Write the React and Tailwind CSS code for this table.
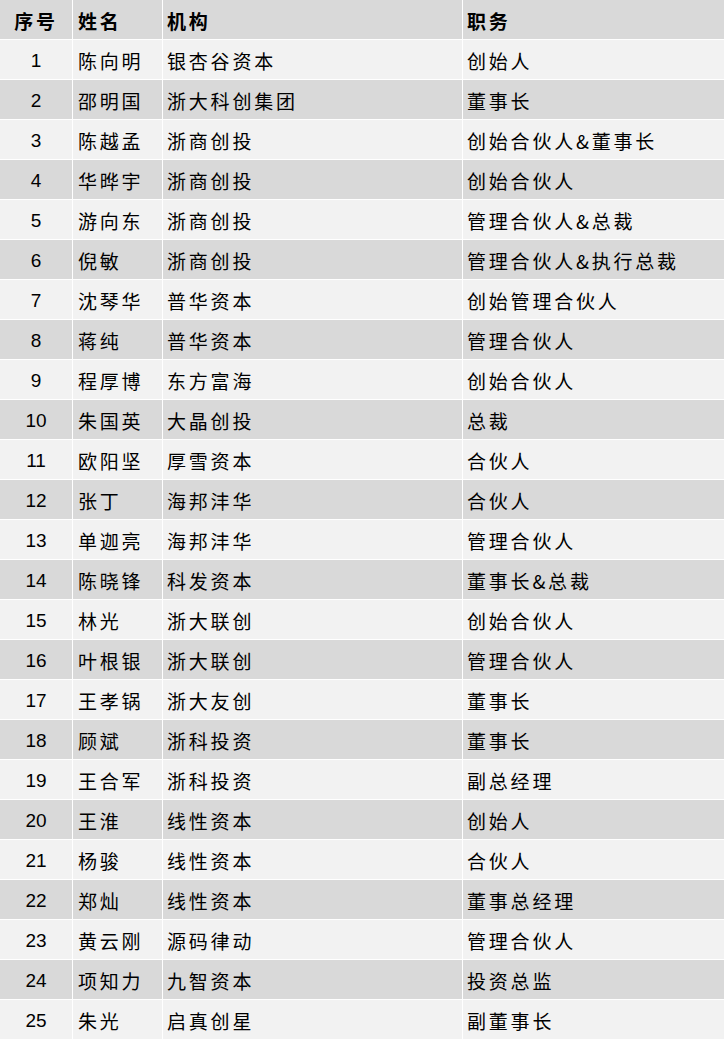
import React from "react";

const rows = [
  ["陈向明", "银杏谷资本", "创始人"],
  ["邵明国", "浙大科创集团", "董事长"],
  ["陈越孟", "浙商创投", "创始合伙人&董事长"],
  ["华晔宇", "浙商创投", "创始合伙人"],
  ["游向东", "浙商创投", "管理合伙人&总裁"],
  ["倪敏", "浙商创投", "管理合伙人&执行总裁"],
  ["沈琴华", "普华资本", "创始管理合伙人"],
  ["蒋纯", "普华资本", "管理合伙人"],
  ["程厚博", "东方富海", "创始合伙人"],
  ["朱国英", "大晶创投", "总裁"],
  ["欧阳坚", "厚雪资本", "合伙人"],
  ["张丁", "海邦沣华", "合伙人"],
  ["单迦亮", "海邦沣华", "管理合伙人"],
  ["陈晓锋", "科发资本", "董事长&总裁"],
  ["林光", "浙大联创", "创始合伙人"],
  ["叶根银", "浙大联创", "管理合伙人"],
  ["王孝锅", "浙大友创", "董事长"],
  ["顾斌", "浙科投资", "董事长"],
  ["王合军", "浙科投资", "副总经理"],
  ["王淮", "线性资本", "创始人"],
  ["杨骏", "线性资本", "合伙人"],
  ["郑灿", "线性资本", "董事总经理"],
  ["黄云刚", "源码律动", "管理合伙人"],
  ["项知力", "九智资本", "投资总监"],
  ["朱光", "启真创星", "副董事长"],
];

const cjk = "font-['Noto_Sans_CJK_SC',sans-serif] text-[19px] tracking-[2.8px]";
const cell = "h-[39px] flex items-center pt-[3px] ";

export default function App() {
  return (
    <div className="w-[724px] h-[1042px] bg-white">
      <div className="grid grid-cols-[72px_89px_299px_1fr] gap-px text-black">
        <div className={cell + "bg-[#d9d9d9] justify-center"}>
          <span className={cjk + " font-bold"}>序号</span>
        </div>
        <div className={cell + "bg-[#d9d9d9] pl-[5px]"}>
          <span className={cjk + " font-bold"}>姓名</span>
        </div>
        <div className={cell + "bg-[#d9d9d9] pl-[4px]"}>
          <span className={cjk + " font-bold"}>机构</span>
        </div>
        <div className={cell + "bg-[#d9d9d9] pl-[4px]"}>
          <span className={cjk + " font-bold"}>职务</span>
        </div>
        {rows.map((r, i) => {
          const bg = i % 2 === 0 ? "bg-[#f2f2f2]" : "bg-[#d9d9d9]";
          return (
            <React.Fragment key={i}>
              <div className={cell + "justify-center font-['Liberation_Sans',sans-serif] text-[19px] " + bg}>
                {i + 1}
              </div>
              <div className={cell + "pl-[5px] " + bg}>
                <span className={cjk}>{r[0]}</span>
              </div>
              <div className={cell + "pl-[4px] " + bg}>
                <span className={cjk}>{r[1]}</span>
              </div>
              <div className={cell + "pl-[4px] " + bg}>
                <span className={cjk}>{r[2]}</span>
              </div>
            </React.Fragment>
          );
        })}
      </div>
    </div>
  );
}
